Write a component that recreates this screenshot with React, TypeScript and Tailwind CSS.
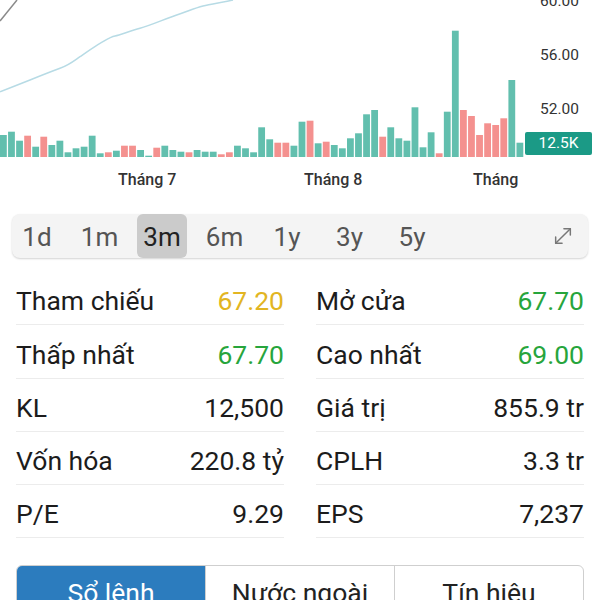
import React from "react";

type Bar = [number, "t" | "r"];

// bar tops (y px), baseline at 157
const bars: Bar[] = [
  [135, "t"], [131.7, "t"], [140.7, "t"], [135.7, "r"], [146.7, "t"], [136.7, "r"],
  [145, "t"], [140.7, "t"], [152.3, "t"], [148.3, "t"], [146.7, "t"], [135.7, "t"],
  [153.3, "t"], [152.3, "r"], [150.7, "t"], [145.7, "r"], [145.7, "r"], [150, "t"],
  [155.7, "t"], [147.7, "r"], [145.7, "t"], [150, "t"], [151.7, "t"], [152.3, "r"],
  [150, "t"], [151.7, "t"], [151.7, "t"], [154.3, "r"], [152.3, "r"], [145.7, "t"],
  [148.3, "t"], [152.3, "t"], [127.3, "t"], [139.3, "t"], [142.7, "r"], [142.7, "r"],
  [145.7, "t"], [121.7, "t"], [120.7, "r"], [143.3, "t"], [141.7, "r"], [145, "t"],
  [148.3, "t"], [138.3, "t"], [133.3, "t"], [114.3, "t"], [110, "t"], [136.7, "r"],
  [127.3, "t"], [138.3, "t"], [140.7, "t"], [107.3, "t"], [147.3, "t"], [132.3, "t"],
  [153.3, "r"], [111.7, "t"], [30.7, "t"], [110, "r"], [116, "r"], [135, "r"],
  [123.3, "r"], [125, "r"], [118.3, "r"], [80, "t"], [142.7, "t"],
];

const ranges = ["1d", "1m", "3m", "6m", "1y", "3y", "5y"];

const stats = [
  { l: "Tham chiếu", v: "67.20", c: "text-[#e2b522]", l2: "Mở cửa", v2: "67.70", c2: "text-[#27a53c]" },
  { l: "Thấp nhất", v: "67.70", c: "text-[#27a53c]", l2: "Cao nhất", v2: "69.00", c2: "text-[#27a53c]" },
  { l: "KL", v: "12,500", c: "text-[#1c1c1c]", l2: "Giá trị", v2: "855.9 tr", c2: "text-[#1c1c1c]" },
  { l: "Vốn hóa", v: "220.8 tỷ", c: "text-[#1c1c1c]", l2: "CPLH", v2: "3.3 tr", c2: "text-[#1c1c1c]" },
  { l: "P/E", v: "9.29", c: "text-[#1c1c1c]", l2: "EPS", v2: "7,237", c2: "text-[#1c1c1c]" },
];

function Chart() {
  return (
    <div className="relative h-[200px]">
      <svg width="600" height="160" className="absolute left-0 top-0">
        <path
          d="M0 91.7 C15 86 20 84 30 80 S50 72 60 68.3 S75 60 80 56.7 S95 46 100 43.3 S110 37 115 36 S130 31 140 28.3 S165 19 176.7 15 S195 8 203 6 S225 2 233 0"
          fill="none"
          stroke="#b7dbe5"
          strokeWidth="1.5"
        />
        <path d="M0 21 L17 0" fill="none" stroke="#8a8a8a" strokeWidth="1.5" />
        {bars.map(([top, c], i) => (
          <rect
            key={i}
            x={i * 8.07}
            y={top}
            width={6.8}
            height={157 - top}
            fill={c === "t" ? "#62bfae" : "#f4918f"}
          />
        ))}
      </svg>
      <span className="absolute right-[21px] top-[-6px] text-[15.5px] leading-none text-[#333]">60.00</span>
      <span className="absolute right-[21px] top-[48px] text-[15.5px] leading-none text-[#333]">56.00</span>
      <span className="absolute right-[21px] top-[102px] text-[15.5px] leading-none text-[#333]">52.00</span>
      <div className="absolute left-[525px] top-[132px] flex h-[23px] w-[67px] items-center justify-center rounded-[2px] bg-[#1b9a86] text-[15.5px] leading-none text-white">
        12.5K
      </div>
      <span className="absolute left-[118px] top-[172px] text-[16px] font-medium leading-none text-[#333]">Tháng 7</span>
      <span className="absolute left-[304px] top-[172px] text-[16px] font-medium leading-none text-[#333]">Tháng 8</span>
      <span className="absolute left-[473px] top-[172px] text-[16px] font-medium leading-none text-[#333]">Tháng</span>
    </div>
  );
}

export default function App() {
  return (
    <div className="h-[600px] w-[600px] overflow-hidden bg-white font-['Roboto',sans-serif]">
      <Chart />

      <div className="px-3 pt-[14px]">
        <div className="flex h-[44px] items-center rounded-lg bg-[#f4f4f4] pr-[14px] shadow-[0_1px_2px_rgba(0,0,0,0.18)]">
          <div className="flex h-full gap-[12.5px]">
            {ranges.map((r) => (
              <div
                key={r}
                className={
                  r === "3m"
                    ? "flex h-full w-[50px] items-center justify-center rounded-md bg-[#cbcbcb] pt-[2px] text-[26px] text-[#222]"
                    : "flex h-full w-[50px] items-center justify-center pt-[2px] text-[26px] text-[#555]"
                }
              >
                {r}
              </div>
            ))}
          </div>
          <svg
            className="ml-auto h-[22px] w-[22px]"
            viewBox="0 0 24 24"
            fill="none"
            stroke="#777"
            strokeWidth="1.6"
            strokeLinecap="round"
            strokeLinejoin="round"
          >
            <polyline points="13 4 20 4 20 11" />
            <polyline points="11 20 4 20 4 13" />
            <line x1="20" y1="4" x2="4" y2="20" />
          </svg>
        </div>
      </div>

      <div className="mt-[14px] grid grid-cols-2 gap-x-8 px-4">
        {stats.map((s) => (
          <React.Fragment key={s.l}>
            <div className="flex h-[53.25px] items-center justify-between border-b border-[#ececec] pt-[6px] text-[26.5px]">
              <span className="text-[#1c1c1c]">{s.l}</span>
              <span className={s.c}>{s.v}</span>
            </div>
            <div className="flex h-[53.25px] items-center justify-between border-b border-[#ececec] pt-[6px] text-[26.5px]">
              <span className="text-[#1c1c1c]">{s.l2}</span>
              <span className={s.c2}>{s.v2}</span>
            </div>
          </React.Fragment>
        ))}
      </div>

      <div className="mx-4 mt-[27px] flex overflow-hidden rounded-t-md border border-[#cfcfcf]">
        <div className="flex h-[54px] flex-1 items-center justify-center bg-[#2c7cbe] text-[26.5px] text-white">Sổ lệnh</div>
        <div className="flex h-[54px] flex-1 items-center justify-center border-l border-[#cfcfcf] text-[26.5px] text-[#222]">Nước ngoài</div>
        <div className="flex h-[54px] flex-1 items-center justify-center border-l border-[#cfcfcf] text-[26.5px] text-[#222]">Tín hiệu</div>
      </div>
    </div>
  );
}
